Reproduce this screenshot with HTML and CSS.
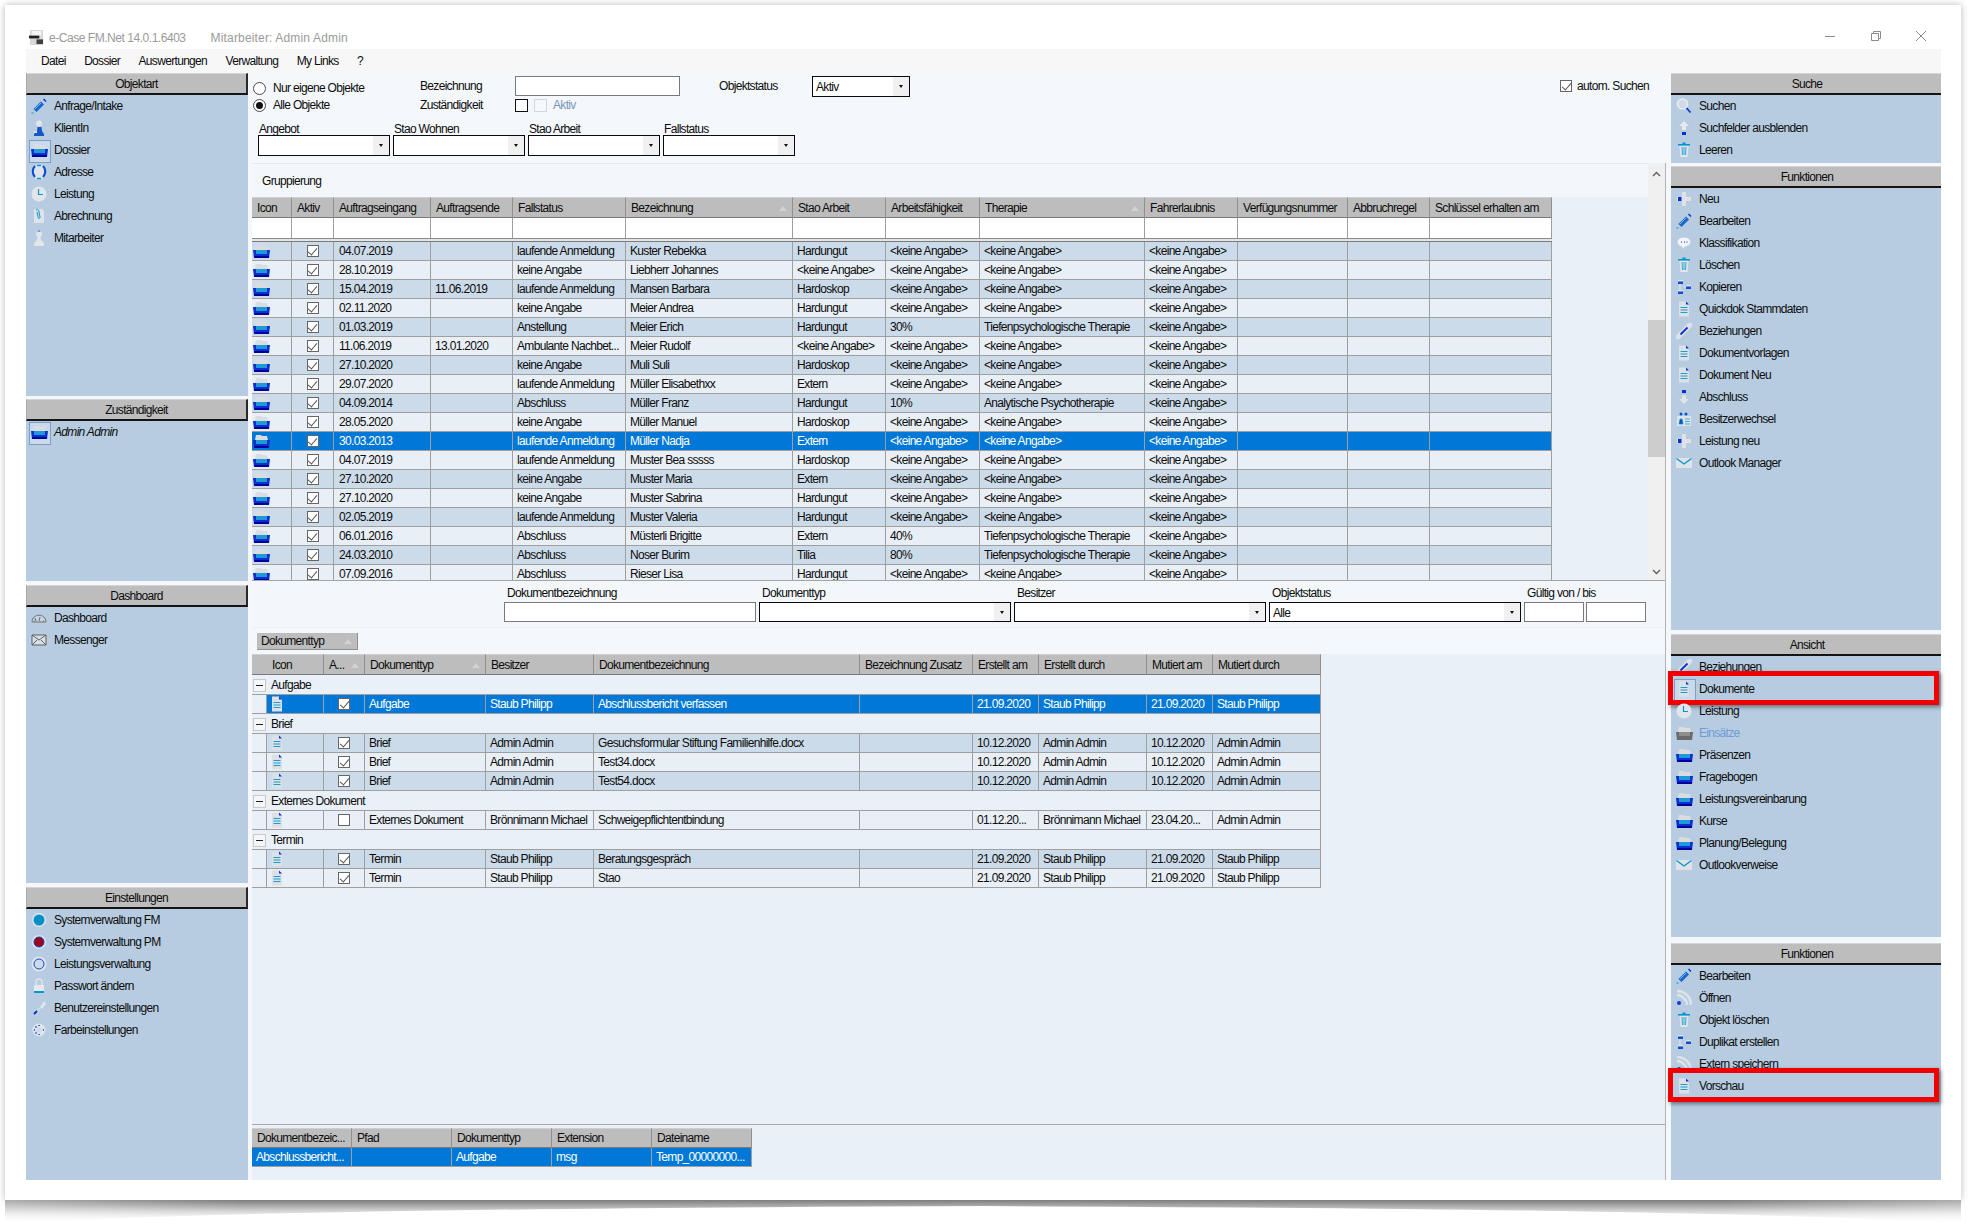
FILE: index.html
```html
<!DOCTYPE html>
<html lang="de">
<head>
<meta charset="utf-8">
<title>e-Case FM.Net</title>
<link rel="stylesheet" href="styles.css">
</head>
<body>
<svg class="defs" width="0" height="0" aria-hidden="true">
  <defs>
    <linearGradient id="sh" x1="0" y1="0" x2="0" y2="1"><stop offset="0" stop-color="#7d7d7d"/><stop offset=".28" stop-color="#a8a8a8" stop-opacity=".9"/><stop offset="1" stop-color="#ffffff" stop-opacity="0"/></linearGradient>
    <linearGradient id="edge" x1="0" y1="0" x2="1" y2="0"><stop offset="0" stop-color="#fff" stop-opacity=".35"/><stop offset=".12" stop-color="#fff" stop-opacity="0"/><stop offset=".88" stop-color="#fff" stop-opacity="0"/><stop offset="1" stop-color="#fff" stop-opacity=".35"/></linearGradient>
    <symbol id="folder" viewBox="0 0 17 13"><path d="M3 0h5l1 1h5l1 4H2z" fill="#d9dce0"/><path d="M0 5h17l-1 8H1z" fill="#0a2fd0"/><path d="M3 5h11v4H3z" fill="#1f9ad6"/><path d="M1 11h15l-.3 2H1.300z" fill="#00009a"/></symbol>
    <symbol id="foldergray" viewBox="0 0 17 13"><path d="M3 0h5l1 1h5l1 4H2z" fill="#d9dce0"/><path d="M0 5h17l-1 8H1z" fill="#6a6a6a"/><path d="M3 5h11v4H3z" fill="#8d8d8d"/></symbol>
    <symbol id="pencil" viewBox="0 0 16 16"><path d="M2.500 11 10 3.500l3 3L5.500 14z" fill="#1767cc"/><path d="m4 11 6-6" stroke="#9cc8ec" stroke-width=".8"/><path d="m12 1.500 1-1 2.500 2.500-1 1z" fill="#0a2fd0"/><path d="M.5 14.500h2v1h-2z" fill="#0099d8"/></symbol>
    <symbol id="person" viewBox="0 0 16 16"><circle cx="8" cy="3.500" r="3" fill="#e3e5e8"/><path d="M6.500 7h4l.5 4 2 3v2H3v-2l3-3z" fill="#1158c8"/><path d="M3 11h3v2H3z" fill="#d8dce0"/></symbol>
    <symbol id="globe" viewBox="0 0 16 16"><circle cx="8" cy="8" r="7.500" fill="#dfe4ea"/><path d="M4 2c-3 3-3 8 0 11M12 2c3 3 3 8 0 11" stroke="#0a4fd0" stroke-width="2.200" fill="none"/><path d="M6 1.500h4M6 14.500h4" stroke="#0097cf" stroke-width="1.300"/></symbol>
    <symbol id="clock" viewBox="0 0 16 16"><circle cx="8" cy="8" r="7.500" fill="#e2e5e9"/><path d="M7.500 3v5.500H12" stroke="#0097cf" stroke-width="1.200" fill="none"/></symbol>
    <symbol id="clip" viewBox="0 0 16 16"><path d="M3 1h8l2 2v12H3z" fill="#dfe3e8"/><path d="M5 2c2-1 3 0 3 2l1 5c0 2-2 2-2 0L6 4" stroke="#0097cf" stroke-width="1" fill="none"/></symbol>
    <symbol id="bust" viewBox="0 0 16 16"><circle cx="8" cy="4" r="3" fill="#e3e5e8"/><path d="M6.500 1.500c1-1.500 2-1.500 3 0z" fill="#0a3fd0"/><path d="M6.500 7h3l.5 3 3 3v3H3v-3l3-3z" fill="#e3e5e8"/></symbol>
    <symbol id="lens" viewBox="0 0 16 16"><circle cx="6.500" cy="6" r="5" fill="#cfdbe8" stroke="#e9edf2" stroke-width="1.600"/><path d="m10.500 10 4 4.500" stroke="#0a3fd0" stroke-width="1.800"/></symbol>
    <symbol id="up" viewBox="0 0 16 16"><path d="M8 1l5 5h-3v4H6V6H3z" fill="#e6e9ed"/><path d="M6 12h4v3H6z" fill="#0a2fd0"/></symbol>
    <symbol id="down" viewBox="0 0 16 16"><path d="M6 1h4v3H6z" fill="#0a2fd0"/><path d="M6 6h4v4h3l-5 5-5-5h3z" fill="#e0e3e8"/></symbol>
    <symbol id="trash" viewBox="0 0 16 16"><path d="M2 2h12v1.500H2z" fill="#0097cf"/><path d="M6.500 .5h3v2h-3z" fill="#0097cf"/><path d="M3.500 4h9l-1 11h-7z" fill="#e2e6ea"/><path d="M6 5l.5 8M8 5v8M10 5l-.5 8" stroke="#0097cf" stroke-width=".8"/></symbol>
    <symbol id="plus" viewBox="0 0 16 16"><path d="M6 1h4v5h5v4h-5v5H6v-5H1V6h5z" fill="#dfe3e8"/><path d="M2 6h3.500v4H2z" fill="#0a2fd0"/></symbol>
    <symbol id="speech" viewBox="0 0 16 16"><ellipse cx="8" cy="7" rx="6.500" ry="4.500" fill="#f2f4f7"/><path d="M6 11l3 0-2 3z" fill="#f2f4f7"/><path d="M5 7h1M8 7h1M10.500 7h1" stroke="#0a3fa0" stroke-width="1.200"/></symbol>
    <symbol id="copy" viewBox="0 0 16 16"><path d="M4 4v8M8 8h3" stroke="#dfe3e8" stroke-width="1.200"/><path d="M2 1h5v1.500H2zM2 11h5v1.500H2zM10 6h5v1.500h-5z" fill="#dfe3e8"/><path d="M2 2.500h5V5H2zM2 12.500h5V15H2zM10 7.500h5V10h-5z" fill="#0a4fd0"/></symbol>
    <symbol id="doc" viewBox="0 0 16 16"><path d="M3 .5h7l3 3v12H3z" fill="#dde1e6"/><path d="M10 .5l3 3h-3z" fill="#0a2fd0"/><path d="M4.500 6.500h7M4.500 9h7M4.500 11.500h7" stroke="#0097cf" stroke-width=".9"/></symbol>
    <symbol id="link" viewBox="0 0 16 16"><path d="M2 14 14 2" stroke="#dfe3e8" stroke-width="5" stroke-linecap="round"/><path d="m4.500 11.500 7-7" stroke="#0a2fd0" stroke-width="1.800"/></symbol>
    <symbol id="swap" viewBox="0 0 16 16"><path d="M1 5h14v10H1z" fill="#dfe3e8"/><circle cx="5" cy="3" r="1.500" fill="#0a4fd0"/><circle cx="10" cy="3" r="1.500" fill="#0a4fd0"/><path d="M3 13l1-5h2l1 5zM9 8h5M9 10.500h5M9 13h5" fill="#0a4fd0" stroke="#0097cf" stroke-width=".7"/></symbol>
    <symbol id="mail" viewBox="0 0 16 16"><path d="M0 3h16v10H0z" fill="#dfe3e8"/><path d="M.5 3.500 8 9l7.500-5.500" stroke="#0097cf" stroke-width="1.400" fill="none"/></symbol>
    <symbol id="rss" viewBox="0 0 16 16"><path d="M1 5c5 0 10 5 10 10M1 1c8 0 14 6 14 14" stroke="#dfe3e8" stroke-width="2.500" fill="none"/><circle cx="3" cy="13" r="2" fill="#0a3fd0"/></symbol>
    <symbol id="gauge" viewBox="0 0 16 16"><path d="M1 12C1 3 15 3 15 12z" fill="#c7d4e2" stroke="#6f6f6f"/><path d="m5 11-1-3M8 11l1-4M3 11h1M12 11h1" stroke="#6f6f6f"/></symbol>
    <symbol id="env" viewBox="0 0 16 16"><path d="M1 3h14v10H1z" fill="#d8e0ea" stroke="#5f5f5f"/><path d="m1 3 7 5 7-5M1 13l5-5M15 13l-5-5" stroke="#5f5f5f" fill="none"/></symbol>
    <symbol id="dotb" viewBox="0 0 16 16"><circle cx="8" cy="8" r="7" fill="#dfe4ea"/><circle cx="8" cy="8" r="5.500" fill="#0090c8"/></symbol>
    <symbol id="dotr" viewBox="0 0 16 16"><circle cx="8" cy="8" r="7" fill="#dfe4ea"/><circle cx="8" cy="8" r="5" fill="#a00018" stroke="#0a3fd0"/></symbol>
    <symbol id="ring" viewBox="0 0 16 16"><circle cx="8" cy="8" r="7.500" fill="#dfe4ea"/><circle cx="8" cy="8" r="5" fill="#cfdbe8" stroke="#0a4fd0"/></symbol>
    <symbol id="lock" viewBox="0 0 16 16"><path d="M5 7V4c0-4 6-4 6 0v3" stroke="#dfe3e8" stroke-width="1.500" fill="none"/><path d="M3 7h10v6H3z" fill="#e6e9ed"/><path d="M3 13h10v2H3z" fill="#0097cf"/></symbol>
    <symbol id="wrench" viewBox="0 0 16 16"><path d="M9 7l4-6 2 3-4 5z" fill="#e2e5e9"/><path d="M8 7l2 2-5 5-2-2z" fill="#cdd6e0"/><path d="m3 14 3-3" stroke="#0a2fd0" stroke-width="2"/></symbol>
    <symbol id="gear" viewBox="0 0 16 16"><circle cx="8" cy="8" r="6.500" fill="#dfe4ea"/><path d="M3 8h1M8 3v1M8 13v-1M12 8h1M4.500 4.500l1 1M4.500 11.500l1-1" stroke="#0a3fd0" stroke-width="1.500"/><circle cx="8" cy="8" r="2.500" fill="#cfdbe8"/></symbol>
    <symbol id="app" viewBox="0 0 16 16"><path d="M1 0h14v16H1z" fill="#d8d8d8"/><path d="M3 1h10v5H3z" fill="#f4f4f4"/><path d="M0 6h11v3H0z" fill="#202020"/><path d="M8 10h7v5H8z" fill="#404040"/></symbol>
  </defs>
</svg>

<div class="window">
  <header class="titlebar">
    <svg class="ic-app"><use href="#app"/></svg>
    <span class="ttl">e-Case FM.Net 14.0.1.6403</span>
    <span class="ttl ttl-user">Mitarbeiter: Admin Admin</span>
    <div class="winctl">
      <svg class="wc" viewBox="0 0 10 10"><path d="M0 5.500h10" /></svg>
      <svg class="wc" viewBox="0 0 10 10"><path d="M.5 2.500h7v7h-7zM2.500 2.500v-2h7v7h-2"/></svg>
      <svg class="wc" viewBox="0 0 10 10"><path d="m0 0 10 10M10 0 0 10"/></svg>
    </div>
  </header>
  <nav class="menubar">
    <span>Datei</span><span>Dossier</span><span>Auswertungen</span><span>Verwaltung</span><span>My Links</span><span>?</span>
  </nav>

  <div class="content">
    <aside class="side side-left">
      <section class="sec h323">
        <h2 class="sec-h">Objektart</h2>
        <div class="it"><span class="ic"><svg><use href="#pencil"/></svg></span>Anfrage/Intake</div>
        <div class="it"><span class="ic"><svg><use href="#person"/></svg></span>KlientIn</div>
        <div class="it"><span class="ic hot"><svg class="fold"><use href="#folder"/></svg></span>Dossier</div>
        <div class="it"><span class="ic"><svg><use href="#globe"/></svg></span>Adresse</div>
        <div class="it"><span class="ic"><svg><use href="#clock"/></svg></span>Leistung</div>
        <div class="it"><span class="ic"><svg><use href="#clip"/></svg></span>Abrechnung</div>
        <div class="it"><span class="ic"><svg><use href="#bust"/></svg></span>Mitarbeiter</div>
      </section>
      <section class="sec h182">
        <h2 class="sec-h">Zuständigkeit</h2>
        <div class="it ital"><span class="ic hot"><svg class="fold"><use href="#folder"/></svg></span>Admin Admin</div>
      </section>
      <section class="sec h298">
        <h2 class="sec-h">Dashboard</h2>
        <div class="it"><span class="ic"><svg><use href="#gauge"/></svg></span>Dashboard</div>
        <div class="it"><span class="ic"><svg><use href="#env"/></svg></span>Messenger</div>
      </section>
      <section class="sec grow h-ein">
        <h2 class="sec-h">Einstellungen</h2>
        <div class="it"><span class="ic"><svg><use href="#dotb"/></svg></span>Systemverwaltung FM</div>
        <div class="it"><span class="ic"><svg><use href="#dotr"/></svg></span>Systemverwaltung PM</div>
        <div class="it"><span class="ic"><svg><use href="#ring"/></svg></span>Leistungsverwaltung</div>
        <div class="it"><span class="ic"><svg><use href="#lock"/></svg></span>Passwort ändern</div>
        <div class="it"><span class="ic"><svg><use href="#wrench"/></svg></span>Benutzereinstellungen</div>
        <div class="it"><span class="ic"><svg><use href="#gear"/></svg></span>Farbeinstellungen</div>
      </section>
    </aside>

    <main class="main">
      <section class="search">
        <div class="s-grid">
          <label class="radio-row r1"><i class="radio"></i>Nur eigene Objekte</label>
          <span class="lbl up2">Bezeichnung</span>
          <span class="inp w165"></span>
          <span class="lbl up2">Objektstatus</span>
          <span class="combo w98"><b>Aktiv</b><i class="cb-arrow"></i></span>
          <label class="autom"><i class="cb on"></i>autom. Suchen</label>
          <label class="radio-row"><i class="radio sel"></i>Alle Objekte</label>
          <span class="lbl">Zuständigkeit</span>
          <span class="chkpair"><i class="cb blk"></i><i class="cb dis"></i><em>Aktiv</em></span>
        </div>
        <div class="s-combos">
          <div class="fld"><span>Angebot</span><span class="combo"><b></b><i class="cb-arrow"></i></span></div>
          <div class="fld"><span>Stao Wohnen</span><span class="combo"><b></b><i class="cb-arrow"></i></span></div>
          <div class="fld"><span>Stao Arbeit</span><span class="combo"><b></b><i class="cb-arrow"></i></span></div>
          <div class="fld"><span>Fallstatus</span><span class="combo"><b></b><i class="cb-arrow"></i></span></div>
        </div>
      </section>

      <section class="lower">
        <div class="upper">
          <div class="upper-main">
            <div class="grp-label">Gruppierung</div>
            <div class="grid-view">
              <table class="tbl t-cases">
                <colgroup><col class="c40"><col class="c42"><col class="c97"><col class="c82"><col class="c113"><col class="c167"><col class="c93"><col class="c94"><col class="c165"><col class="c93"><col class="c110"><col class="c82"><col class="c122"></colgroup>
                <thead>
                  <tr><th>Icon</th><th>Aktiv</th><th>Auftragseingang</th><th>Auftragsende</th><th>Fallstatus</th><th>Bezeichnung<i class="sort"></i></th><th>Stao Arbeit</th><th>Arbeitsfähigkeit</th><th>Therapie<i class="sort"></i></th><th>Fahrerlaubnis</th><th>Verfügungsnummer</th><th>Abbruchregel</th><th>Schlüssel erhalten am</th></tr>
                  <tr class="flt"><td></td><td></td><td></td><td></td><td></td><td></td><td></td><td></td><td></td><td></td><td></td><td></td><td></td></tr>
                  <tr class="sep"><td colspan="13"></td></tr>
                </thead>
                <tbody>
                  <tr class="a"><td class="ci"><svg class="fold"><use href="#folder"/></svg></td><td class="cc"><i class="cb on"></i></td><td>04.07.2019</td><td></td><td>laufende Anmeldung</td><td>Kuster Rebekka</td><td>Hardungut</td><td>&lt;keine Angabe&gt;</td><td>&lt;keine Angabe&gt;</td><td>&lt;keine Angabe&gt;</td><td></td><td></td><td></td></tr>
                  <tr class="b"><td class="ci"><svg class="fold"><use href="#folder"/></svg></td><td class="cc"><i class="cb on"></i></td><td>28.10.2019</td><td></td><td>keine Angabe</td><td>Liebherr Johannes</td><td>&lt;keine Angabe&gt;</td><td>&lt;keine Angabe&gt;</td><td>&lt;keine Angabe&gt;</td><td>&lt;keine Angabe&gt;</td><td></td><td></td><td></td></tr>
                  <tr class="a"><td class="ci"><svg class="fold"><use href="#folder"/></svg></td><td class="cc"><i class="cb on"></i></td><td>15.04.2019</td><td>11.06.2019</td><td>laufende Anmeldung</td><td>Mansen Barbara</td><td>Hardoskop</td><td>&lt;keine Angabe&gt;</td><td>&lt;keine Angabe&gt;</td><td>&lt;keine Angabe&gt;</td><td></td><td></td><td></td></tr>
                  <tr class="b"><td class="ci"><svg class="fold"><use href="#folder"/></svg></td><td class="cc"><i class="cb on"></i></td><td>02.11.2020</td><td></td><td>keine Angabe</td><td>Meier Andrea</td><td>Hardungut</td><td>&lt;keine Angabe&gt;</td><td>&lt;keine Angabe&gt;</td><td>&lt;keine Angabe&gt;</td><td></td><td></td><td></td></tr>
                  <tr class="a"><td class="ci"><svg class="fold"><use href="#folder"/></svg></td><td class="cc"><i class="cb on"></i></td><td>01.03.2019</td><td></td><td>Anstellung</td><td>Meier Erich</td><td>Hardungut</td><td>30%</td><td>Tiefenpsychologische Therapie</td><td>&lt;keine Angabe&gt;</td><td></td><td></td><td></td></tr>
                  <tr class="b"><td class="ci"><svg class="fold"><use href="#folder"/></svg></td><td class="cc"><i class="cb on"></i></td><td>11.06.2019</td><td>13.01.2020</td><td>Ambulante Nachbet...</td><td>Meier Rudolf</td><td>&lt;keine Angabe&gt;</td><td>&lt;keine Angabe&gt;</td><td>&lt;keine Angabe&gt;</td><td>&lt;keine Angabe&gt;</td><td></td><td></td><td></td></tr>
                  <tr class="a"><td class="ci"><svg class="fold"><use href="#folder"/></svg></td><td class="cc"><i class="cb on"></i></td><td>27.10.2020</td><td></td><td>keine Angabe</td><td>Muli Suli</td><td>Hardoskop</td><td>&lt;keine Angabe&gt;</td><td>&lt;keine Angabe&gt;</td><td>&lt;keine Angabe&gt;</td><td></td><td></td><td></td></tr>
                  <tr class="b"><td class="ci"><svg class="fold"><use href="#folder"/></svg></td><td class="cc"><i class="cb on"></i></td><td>29.07.2020</td><td></td><td>laufende Anmeldung</td><td>Müller Elisabethxx</td><td>Extern</td><td>&lt;keine Angabe&gt;</td><td>&lt;keine Angabe&gt;</td><td>&lt;keine Angabe&gt;</td><td></td><td></td><td></td></tr>
                  <tr class="a"><td class="ci"><svg class="fold"><use href="#folder"/></svg></td><td class="cc"><i class="cb on"></i></td><td>04.09.2014</td><td></td><td>Abschluss</td><td>Müller Franz</td><td>Hardungut</td><td>10%</td><td>Analytische Psychotherapie</td><td>&lt;keine Angabe&gt;</td><td></td><td></td><td></td></tr>
                  <tr class="b"><td class="ci"><svg class="fold"><use href="#folder"/></svg></td><td class="cc"><i class="cb on"></i></td><td>28.05.2020</td><td></td><td>keine Angabe</td><td>Müller Manuel</td><td>Hardoskop</td><td>&lt;keine Angabe&gt;</td><td>&lt;keine Angabe&gt;</td><td>&lt;keine Angabe&gt;</td><td></td><td></td><td></td></tr>
                  <tr class="s"><td class="ci"><svg class="fold"><use href="#folder"/></svg></td><td class="cc"><i class="cb on"></i></td><td>30.03.2013</td><td></td><td>laufende Anmeldung</td><td>Müller Nadja</td><td>Extern</td><td>&lt;keine Angabe&gt;</td><td>&lt;keine Angabe&gt;</td><td>&lt;keine Angabe&gt;</td><td></td><td></td><td></td></tr>
                  <tr class="b"><td class="ci"><svg class="fold"><use href="#folder"/></svg></td><td class="cc"><i class="cb on"></i></td><td>04.07.2019</td><td></td><td>laufende Anmeldung</td><td>Muster Bea sssss</td><td>Hardoskop</td><td>&lt;keine Angabe&gt;</td><td>&lt;keine Angabe&gt;</td><td>&lt;keine Angabe&gt;</td><td></td><td></td><td></td></tr>
                  <tr class="a"><td class="ci"><svg class="fold"><use href="#folder"/></svg></td><td class="cc"><i class="cb on"></i></td><td>27.10.2020</td><td></td><td>keine Angabe</td><td>Muster Maria</td><td>Extern</td><td>&lt;keine Angabe&gt;</td><td>&lt;keine Angabe&gt;</td><td>&lt;keine Angabe&gt;</td><td></td><td></td><td></td></tr>
                  <tr class="b"><td class="ci"><svg class="fold"><use href="#folder"/></svg></td><td class="cc"><i class="cb on"></i></td><td>27.10.2020</td><td></td><td>keine Angabe</td><td>Muster Sabrina</td><td>Hardungut</td><td>&lt;keine Angabe&gt;</td><td>&lt;keine Angabe&gt;</td><td>&lt;keine Angabe&gt;</td><td></td><td></td><td></td></tr>
                  <tr class="a"><td class="ci"><svg class="fold"><use href="#folder"/></svg></td><td class="cc"><i class="cb on"></i></td><td>02.05.2019</td><td></td><td>laufende Anmeldung</td><td>Muster Valeria</td><td>Hardungut</td><td>&lt;keine Angabe&gt;</td><td>&lt;keine Angabe&gt;</td><td>&lt;keine Angabe&gt;</td><td></td><td></td><td></td></tr>
                  <tr class="b"><td class="ci"><svg class="fold"><use href="#folder"/></svg></td><td class="cc"><i class="cb on"></i></td><td>06.01.2016</td><td></td><td>Abschluss</td><td>Müsterli Brigitte</td><td>Extern</td><td>40%</td><td>Tiefenpsychologische Therapie</td><td>&lt;keine Angabe&gt;</td><td></td><td></td><td></td></tr>
                  <tr class="a"><td class="ci"><svg class="fold"><use href="#folder"/></svg></td><td class="cc"><i class="cb on"></i></td><td>24.03.2010</td><td></td><td>Abschluss</td><td>Noser Burim</td><td>Tilia</td><td>80%</td><td>Tiefenpsychologische Therapie</td><td>&lt;keine Angabe&gt;</td><td></td><td></td><td></td></tr>
                  <tr class="b"><td class="ci"><svg class="fold"><use href="#folder"/></svg></td><td class="cc"><i class="cb on"></i></td><td>07.09.2016</td><td></td><td>Abschluss</td><td>Rieser Lisa</td><td>Hardungut</td><td>&lt;keine Angabe&gt;</td><td>&lt;keine Angabe&gt;</td><td>&lt;keine Angabe&gt;</td><td></td><td></td><td></td></tr>
                </tbody>
              </table>
            </div>
          </div>
          <div class="vscroll">
            <svg class="sb-arrow" viewBox="0 0 9 6"><path d="M1 5l3.500-3.500L8 5"/></svg>
            <div class="sb-track"><div class="sb-thumb"></div></div>
            <svg class="sb-arrow" viewBox="0 0 9 6"><path d="M1 1l3.500 3.500L8 1"/></svg>
          </div>
        </div>

        <div class="docfilter">
          <div class="fld w252"><span>Dokumentbezeichnung</span><span class="inp"></span></div>
          <div class="fld w252"><span>Dokumenttyp</span><span class="combo"><b></b><i class="cb-arrow"></i></span></div>
          <div class="fld w252"><span>Besitzer</span><span class="combo"><b></b><i class="cb-arrow"></i></span></div>
          <div class="fld w252"><span>Objektstatus</span><span class="combo"><b>Alle</b><i class="cb-arrow"></i></span></div>
          <div class="fld w123"><span>Gültig von / bis</span><span class="pair"><span class="inp"></span><span class="inp"></span></span></div>
        </div>

        <div class="docband"><span class="chip">Dokumenttyp<i class="sort"></i></span></div>

        <div class="docview">
          <table class="tbl t-docs">
            <colgroup><col class="c15"><col class="c57"><col class="c41"><col class="c121"><col class="c108"><col class="c266"><col class="c113"><col class="c66"><col class="c108"><col class="c66"><col class="c108"></colgroup>
            <thead>
              <tr><th colspan="2" class="th-icon">Icon</th><th>A...<i class="sort"></i></th><th>Dokumenttyp<i class="sort"></i></th><th>Besitzer</th><th>Dokumentbezeichnung</th><th>Bezeichnung Zusatz</th><th>Erstellt am</th><th>Erstellt durch</th><th>Mutiert am</th><th>Mutiert durch</th></tr>
            </thead>
            <tbody>
              <tr class="g"><td colspan="11"><i class="minus"></i>Aufgabe</td></tr>
              <tr class="s"><td class="ind"></td><td class="ci"><svg class="dc"><use href="#doc"/></svg></td><td class="cc"><i class="cb on"></i></td><td>Aufgabe</td><td>Staub Philipp</td><td>Abschlussbericht verfassen</td><td></td><td>21.09.2020</td><td>Staub Philipp</td><td>21.09.2020</td><td>Staub Philipp</td></tr>
              <tr class="g"><td colspan="11"><i class="minus"></i>Brief</td></tr>
              <tr class="a"><td class="ind"></td><td class="ci"><svg class="dc"><use href="#doc"/></svg></td><td class="cc"><i class="cb on"></i></td><td>Brief</td><td>Admin Admin</td><td>Gesuchsformular Stiftung Familienhilfe.docx</td><td></td><td>10.12.2020</td><td>Admin Admin</td><td>10.12.2020</td><td>Admin Admin</td></tr>
              <tr class="b"><td class="ind"></td><td class="ci"><svg class="dc"><use href="#doc"/></svg></td><td class="cc"><i class="cb on"></i></td><td>Brief</td><td>Admin Admin</td><td>Test34.docx</td><td></td><td>10.12.2020</td><td>Admin Admin</td><td>10.12.2020</td><td>Admin Admin</td></tr>
              <tr class="a"><td class="ind"></td><td class="ci"><svg class="dc"><use href="#doc"/></svg></td><td class="cc"><i class="cb on"></i></td><td>Brief</td><td>Admin Admin</td><td>Test54.docx</td><td></td><td>10.12.2020</td><td>Admin Admin</td><td>10.12.2020</td><td>Admin Admin</td></tr>
              <tr class="g"><td colspan="11"><i class="minus"></i>Externes Dokument</td></tr>
              <tr class="b"><td class="ind"></td><td class="ci"><svg class="dc"><use href="#doc"/></svg></td><td class="cc"><i class="cb"></i></td><td>Externes Dokument</td><td>Brönnimann Michael</td><td>Schweigepflichtentbindung</td><td></td><td>01.12.20...</td><td>Brönnimann Michael</td><td>23.04.20...</td><td>Admin Admin</td></tr>
              <tr class="g"><td colspan="11"><i class="minus"></i>Termin</td></tr>
              <tr class="a"><td class="ind"></td><td class="ci"><svg class="dc"><use href="#doc"/></svg></td><td class="cc"><i class="cb on"></i></td><td>Termin</td><td>Staub Philipp</td><td>Beratungsgespräch</td><td></td><td>21.09.2020</td><td>Staub Philipp</td><td>21.09.2020</td><td>Staub Philipp</td></tr>
              <tr class="b"><td class="ind"></td><td class="ci"><svg class="dc"><use href="#doc"/></svg></td><td class="cc"><i class="cb on"></i></td><td>Termin</td><td>Staub Philipp</td><td>Stao</td><td></td><td>21.09.2020</td><td>Staub Philipp</td><td>21.09.2020</td><td>Staub Philipp</td></tr>
            </tbody>
          </table>
        </div>

        <div class="attach">
          <table class="tbl t-att">
            <colgroup><col class="c100"><col class="c100"><col class="c100"><col class="c100"><col class="c100"></colgroup>
            <thead><tr><th>Dokumentbezeic...</th><th>Pfad</th><th>Dokumenttyp</th><th>Extension</th><th>Dateiname</th></tr></thead>
            <tbody><tr class="s"><td>Abschlussbericht...</td><td></td><td>Aufgabe</td><td>msg</td><td>Temp_00000000...</td></tr></tbody>
          </table>
        </div>
      </section>
    </main>

    <aside class="side side-right">
      <section class="sec h90">
        <h2 class="sec-h">Suche</h2>
        <div class="it"><span class="ic"><svg><use href="#lens"/></svg></span>Suchen</div>
        <div class="it"><span class="ic"><svg><use href="#up"/></svg></span>Suchfelder ausblenden</div>
        <div class="it"><span class="ic"><svg><use href="#trash"/></svg></span>Leeren</div>
      </section>
      <section class="sec h463">
        <h2 class="sec-h">Funktionen</h2>
        <div class="it"><span class="ic"><svg><use href="#plus"/></svg></span>Neu</div>
        <div class="it"><span class="ic"><svg><use href="#pencil"/></svg></span>Bearbeiten</div>
        <div class="it"><span class="ic"><svg><use href="#speech"/></svg></span>Klassifikation</div>
        <div class="it"><span class="ic"><svg><use href="#trash"/></svg></span>Löschen</div>
        <div class="it"><span class="ic"><svg><use href="#copy"/></svg></span>Kopieren</div>
        <div class="it"><span class="ic"><svg><use href="#doc"/></svg></span>Quickdok Stammdaten</div>
        <div class="it"><span class="ic"><svg><use href="#link"/></svg></span>Beziehungen</div>
        <div class="it"><span class="ic"><svg><use href="#doc"/></svg></span>Dokumentvorlagen</div>
        <div class="it"><span class="ic"><svg><use href="#doc"/></svg></span>Dokument Neu</div>
        <div class="it"><span class="ic"><svg><use href="#down"/></svg></span>Abschluss</div>
        <div class="it"><span class="ic"><svg><use href="#swap"/></svg></span>Besitzerwechsel</div>
        <div class="it"><span class="ic"><svg><use href="#plus"/></svg></span>Leistung neu</div>
        <div class="it"><span class="ic"><svg><use href="#mail"/></svg></span>Outlook Manager</div>
      </section>
      <section class="sec h303">
        <h2 class="sec-h">Ansicht</h2>
        <div class="it"><span class="ic"><svg><use href="#link"/></svg></span>Beziehungen</div>
        <div class="it"><span class="ic hot"><svg><use href="#doc"/></svg></span>Dokumente<span class="mark"></span></div>
        <div class="it"><span class="ic"><svg><use href="#clock"/></svg></span>Leistung</div>
        <div class="it off"><span class="ic"><svg class="fold"><use href="#foldergray"/></svg></span>Einsätze</div>
        <div class="it"><span class="ic"><svg class="fold"><use href="#folder"/></svg></span>Präsenzen</div>
        <div class="it"><span class="ic"><svg class="fold"><use href="#folder"/></svg></span>Fragebogen</div>
        <div class="it"><span class="ic"><svg class="fold"><use href="#folder"/></svg></span>Leistungsvereinbarung</div>
        <div class="it"><span class="ic"><svg class="fold"><use href="#folder"/></svg></span>Kurse</div>
        <div class="it"><span class="ic"><svg class="fold"><use href="#folder"/></svg></span>Planung/Belegung</div>
        <div class="it"><span class="ic"><svg><use href="#mail"/></svg></span>Outlookverweise</div>
      </section>
      <section class="sec grow h-fn2">
        <h2 class="sec-h">Funktionen</h2>
        <div class="it"><span class="ic"><svg><use href="#pencil"/></svg></span>Bearbeiten</div>
        <div class="it"><span class="ic"><svg><use href="#rss"/></svg></span>Öffnen</div>
        <div class="it"><span class="ic"><svg><use href="#trash"/></svg></span>Objekt löschen</div>
        <div class="it"><span class="ic"><svg><use href="#copy"/></svg></span>Duplikat erstellen</div>
        <div class="it"><span class="ic"><svg><use href="#rss"/></svg></span>Extern speichern</div>
        <div class="it"><span class="ic"><svg><use href="#doc"/></svg></span>Vorschau<span class="mark"></span></div>
      </section>
    </aside>
  </div>

  <svg class="dropshadow" viewBox="0 0 1956 24" preserveAspectRatio="none"><path d="M0 0H1956V24Q1750 9 978 6 210 9 0 24Z" fill="url(#sh)"/><rect width="1956" height="24" fill="url(#edge)"/></svg>
</div>
</body>
</html>
```
FILE: styles.css
```css
* { box-sizing: border-box; }
html, body { margin: 0; padding: 0; }
body {
  width: 1975px; height: 1229px; overflow: hidden; background: #fff;
  font-family: "Liberation Sans", Arial, sans-serif; font-size: 12px; letter-spacing: -.68px; color: #0c0c0c;
}
.defs { position: absolute; }
svg { display: block; }

.window {
  position: relative; width: 1956px; height: 1195px; margin: 5px 0 0 5px; padding: 0 20px 20px 21px;
  background: #fff; box-shadow: 0 0 7px rgba(0,0,0,.28); display: flex; flex-direction: column;
}
.dropshadow { position: absolute; left: 0; bottom: -24px; width: 1956px; height: 24px; }

.titlebar { height: 44px; padding: 25px 15px 0 3px; display: flex; align-items: flex-start; color: #9a9a9a; flex: none; }
.ic-app { width: 15px; height: 15px; margin-right: 5px; }
.ttl { line-height: 16px; letter-spacing: -.46px; }
.ttl-user { margin-left: 25px; letter-spacing: .16px; }
.winctl { margin-left: auto; display: flex; gap: 35.5px; padding-top: 1px; }
.wc { width: 10px; height: 10px; fill: none; stroke: #8a8a8a; stroke-width: 1; }

.menubar { height: 24px; flex: none; background: #f7f7f7; display: flex; align-items: center; padding-left: 15px; gap: 18.5px; }
.menubar span { line-height: 24px; }

.content { flex: 1; display: flex; background: #f4f7fb; min-height: 0; }
.side { flex: none; display: flex; flex-direction: column; }
.side-left { width: 222px; }
.side-right { width: 270px; }
.sec { background: #b7cce1; flex: none; }
.h323 { height: 323px; }
.h182 { height: 182px; margin-top: 3px; }
.h298 { height: 298px; margin-top: 4px; }
.h-ein { margin-top: 4px; }
.h90 { height: 90px; }
.h463 { height: 464px; margin-top: 3px; }
.h303 { height: 303px; margin-top: 4px; }
.h-fn2 { margin-top: 6px; }
.sec.grow { flex: 1; }
.sec-h {
  margin: 0; height: 22px; line-height: 21px; text-align: center; font-size: 12px; font-weight: 400;
  background: #bdbdbd; border-top: 1px solid #d4d4d4; border-bottom: 2px solid #141414;
}
.side-left .sec-h { border-right: 2px solid #2a2a2a; border-left: 1px solid #a8a8a8; }
.side-right .sec-h { padding-left: 2px; }
.it { position: relative; height: 22px; display: flex; align-items: center; padding-left: 1px; }
.ic { width: 24px; height: 22px; margin-right: 3px; display: flex; align-items: center; justify-content: center; flex: none; }
.ic svg { width: 16px; height: 16px; }
.ic svg.fold { width: 17px; height: 13px; }
.ic.hot { position: relative; }
.ic.hot::before { content: ""; position: absolute; left: 2px; top: 1px; width: 20px; height: 21px; background: #cbdaea; border: 1px solid #7d9fc6; }
.ic.hot svg { position: relative; }
.ital { font-style: italic; }
.off { color: #6f9ad4; }
.mark {
  position: absolute; left: -3px; top: -7px; width: 271px; height: 34px;
  border: 5px solid #f00000; box-shadow: 2px 2px 4px rgba(0,0,0,.45);
}

.main { width: 1423px; flex: none; display: flex; flex-direction: column; min-width: 0; }
.search { height: 90px; flex: none; padding-top: 3px; }
.s-grid {
  display: grid; padding-left: 5px; padding-right: 22px;
  grid-template-columns: 167px 95px 204px 93px 98px 1fr auto; grid-template-rows: 21px 16px;
}
.s-grid .radio-row { grid-column: 1; }
.s-grid .radio-row.r1 { align-self: end; margin-bottom: 2px; }
.radio-row { display: flex; align-items: center; gap: 7px; }
.radio { width: 13px; height: 13px; border-radius: 50%; border: 1px solid #4a4a4a; background: #fff; flex: none; position: relative; }
.radio.sel::after { content: ""; position: absolute; left: 2px; top: 2px; width: 7px; height: 7px; border-radius: 50%; background: #111; }
.lbl { align-self: center; }
.lbl.up2 { align-self: start; line-height: 20px; }
.inp { display: block; height: 20px; background: #fff; border: 1px solid #7a7a7a; }
.w165 { width: 165px; }
.combo { display: flex; height: 21px; background: #fff; border: 1px solid #0a0a0a; align-items: stretch; }
.combo b { flex: 1; font-weight: 400; padding-left: 3px; line-height: 20px; }
.w98 { width: 98px; }
.cb-arrow { width: 16px; background: #f0f0f0; position: relative; flex: none; }
.cb-arrow::after { content: ""; position: absolute; left: 5.500px; top: 8px; border: 2.500px solid transparent; border-top: 3.500px solid #111; border-bottom: 0; }
.autom { grid-column: 7; display: flex; align-items: center; gap: 5px; height: 19px; margin-top: 0; }
.cb { display: block; width: 12px; height: 12px; background: #fff; border: 1px solid #666; position: relative; flex: none; }
.cb.on::after {
  content: ""; position: absolute; left: 2.500px; top: 0; width: 4px; height: 8px;
  border-right: 1px solid #555; border-bottom: 1px solid #555; transform: rotate(40deg);
}
.cb.blk { width: 13px; height: 13px; border-color: #111; }
.cb.dis { width: 13px; height: 13px; border-color: #d0d7df; background: #f6f8fb; }
.chkpair { display: flex; align-items: center; gap: 6px; }
.chkpair em { font-style: normal; color: #7896b8; }
.s-combos { display: flex; gap: 3px; padding-left: 10px; margin-top: 9px; }
.fld { display: flex; flex-direction: column; width: 132px; }
.fld > span:first-child { height: 13px; line-height: 13px; padding: 1px 0 0 1px; white-space: nowrap; }

.lower { margin: 0 5px 0 4px; flex: 1; display: flex; flex-direction: column; border-right: 1px solid #b2b2b2; min-height: 0; background: #e9f0f8; }
.upper { height: 418px; flex: none; display: flex; border-bottom: 1px solid #a4a4a4; }
.upper-main { width: 1397px; display: flex; flex-direction: column; }
.grp-label { height: 34px; flex: none; padding: 10px 0 0 10px; line-height: 14px; background: #f3f7fb; border-top: 1px solid #e6e8eb; }
.grid-view { flex: 1; overflow: hidden; background: #e9f0f8; }
.vscroll { width: 17px; flex: none; background: #f0f0f0; display: flex; flex-direction: column; align-items: center; padding: 8px 0 5px; }
.sb-arrow { width: 9px; height: 6px; fill: none; stroke: #606060; stroke-width: 1.400; flex: none; }
.sb-track { flex: 1; width: 100%; padding-top: 143px; }
.sb-thumb { height: 137px; background: #cdcdcd; }

.tbl { border-collapse: separate; border-spacing: 0; table-layout: fixed; }
.t-cases { width: 1300px; }
.t-docs { width: 1069px; }
.t-att { width: 500px; }
.c15 { width: 15px; } .c40 { width: 40px; } .c41 { width: 41px; } .c42 { width: 42px; } .c57 { width: 57px; }
.c66 { width: 66px; } .c82 { width: 82px; } .c93 { width: 93px; } .c94 { width: 94px; } .c97 { width: 97px; }
.c100 { width: 100px; } .c108 { width: 108px; } .c110 { width: 110px; } .c113 { width: 113px; } .c121 { width: 121px; }
.c122 { width: 122px; } .c165 { width: 165px; } .c167 { width: 167px; } .c266 { width: 266px; }
.tbl th {
  position: relative; height: 21px; padding: 0 0 0 5px; text-align: left; font-weight: 400; white-space: nowrap; overflow: hidden;
  background: #bdbdbd; border-right: 1px solid #8f8f8f; border-top: 1px solid #cfcfcf; border-bottom: 1px solid #7a7a7a;
}
.th-icon { padding-left: 20px !important; }
.sort { position: absolute; right: 5px; top: 8px; border: 4px solid transparent; border-bottom: 5px solid #d2d2d2; border-top: 0; }
.tbl td { height: 19px; padding: 0 0 0 4px; white-space: nowrap; overflow: hidden; border-right: 1px solid #9f9f9f; border-bottom: 1px solid #9f9f9f; }
.t-cases tbody td:nth-child(3) { padding-left: 5px; }
.flt td { background: #fff; border-bottom: 0; height: 20px; }
.sep td { height: 4px; padding: 0; background: #e4e6e8; border-top: 1px solid #8a8a8a; border-bottom: 1px solid #7a7a7a; border-right: 0; line-height: 0; font-size: 0; }
tr.a td { background: #ccdbe9; }
tr.b td { background: #e8eff7; }
tr.s td { background: #0078d7; color: #fff; }
.tbl td.ci { padding: 0 0 0 1px; }
.tbl td.cc { padding: 0; }
.cc .cb { margin: 0 auto; }
.ci svg.fold { width: 17px; height: 13px; }
.ci svg.dc { width: 16px; height: 16px; margin-left: 1px; }
.t-docs td.ind { background: #e9f0f8 !important; padding: 0; border-right-color: #9f9f9f; }
tr.g td { height: 20px; padding: 0; background: #e9f0f8; border-right: 1px solid #9f9f9f; }
.minus { display: inline-block; width: 13px; height: 13px; border: 1px solid #c8c8c8; background: #f4f6f8; margin: 0 5px 0 1px; vertical-align: -3px; position: relative; }
.minus::after { content: ""; position: absolute; left: 2px; top: 5px; width: 7px; height: 1px; background: #222; }

.docfilter { height: 46px; flex: none; display: flex; gap: 3px; padding: 6px 0 0 252px; background: #f3f7fb; }
.docfilter .fld > span:first-child { height: 15px; padding: 0 0 0 3px; }
.docfilter .combo, .docfilter .inp { height: 20px; }
.w252 { width: 252px; }
.w123 { width: 123px; }
.pair { display: flex; gap: 2px; }
.pair .inp { width: 60px; }
.docband { height: 27px; flex: none; background: #f4f7fb; padding: 5px 0 0 5px; border-top: 1px solid #eceff3; }
.chip { display: block; position: relative; width: 101px; height: 17px; line-height: 16px; padding-left: 4px; background: #bdbdbd; border-right: 1px solid #8f8f8f; border-bottom: 1px solid #8f8f8f; }
.chip .sort { top: 6px; }
.docview { flex: 1; min-height: 0; overflow: hidden; }
.attach { height: 56px; flex: none; border-top: 1px solid #a8a8a8; padding-top: 3px; }
.t-att th { height: 20px; }
```
